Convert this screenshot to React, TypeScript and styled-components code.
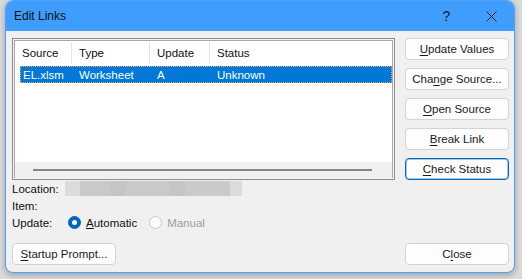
import styled, { createGlobalStyle } from 'styled-components';

const GlobalStyle = createGlobalStyle`
  *, *::before, *::after {
    box-sizing: border-box;
  }
  html, body {
    margin: 0;
    padding: 0;
    background: #dadada;
    font-family: 'Liberation Sans', Arial, sans-serif;
    font-size: 11.5px;
    color: #1a1a1a;
  }
`;

const columns = [
  { key: 'source', title: 'Source', width: 57 },
  { key: 'type', title: 'Type', width: 78 },
  { key: 'update', title: 'Update', width: 60 },
  { key: 'status', title: 'Status', width: 0 },
];

const links = [{ source: 'EL.xlsm', type: 'Worksheet', update: 'A', status: 'Unknown' }];

const sideButtons = [
  { pre: '', key: 'U', post: 'pdate Values' },
  { pre: 'Cha', key: 'n', post: 'ge Source...' },
  { pre: '', key: 'O', post: 'pen Source' },
  { pre: '', key: 'B', post: 'reak Link' },
  { pre: '', key: 'C', post: 'heck Status', focused: true },
];

const App = () => {
  return (
    <>
      <GlobalStyle />
      <Page>
        <Window>
          <TitleBar>
            <Title>Edit Links</Title>
            <TitleButton $shift={3}>?</TitleButton>
            <TitleButton>
              <svg width="11" height="11" viewBox="0 0 11 11">
                <path d="M0.5 0.5 L10.5 10.5 M10.5 0.5 L0.5 10.5" stroke="#1a1a1a" strokeWidth="1" />
              </svg>
            </TitleButton>
          </TitleBar>

          <Content>
            <TopSection>
              <LeftColumn>
                <ListView>
                  <Header>
                    {columns.map((c) => (
                      <HeaderCell key={c.key} $width={c.width}>
                        {c.title}
                      </HeaderCell>
                    ))}
                  </Header>
                  {links.map((l) => (
                    <Row key={l.source} $selected>
                      <FirstCell>{l.source}</FirstCell>
                      <Cell $width={78}>{l.type}</Cell>
                      <Cell $width={60}>{l.update}</Cell>
                      <Cell $width={0}>{l.status}</Cell>
                    </Row>
                  ))}
                  <Spacer />
                  <HScroll>
                    <Thumb />
                  </HScroll>
                </ListView>

                <InfoRow>
                  <Label>Location:</Label>
                  <Blurred />
                </InfoRow>
                <InfoRow>
                  <Label>Item:</Label>
                </InfoRow>
                <InfoRow>
                  <Label>Update:</Label>
                  <RadioGroup>
                    <RadioOption>
                      <Radio $checked />
                      <span>
                        <u>A</u>utomatic
                      </span>
                    </RadioOption>
                    <RadioOption $disabled>
                      <Radio />
                      <span>Manual</span>
                    </RadioOption>
                  </RadioGroup>
                </InfoRow>
              </LeftColumn>

              <ButtonStack>
                {sideButtons.map((b) => (
                  <Button key={b.post} $focused={b.focused}>
                    {b.pre}
                    <u>{b.key}</u>
                    {b.post}
                  </Button>
                ))}
              </ButtonStack>
            </TopSection>

            <BottomRow>
              <Button>
                <u>S</u>tartup Prompt...
              </Button>
              <Button>
                C<u>l</u>ose
              </Button>
            </BottomRow>
          </Content>
        </Window>
      </Page>
    </>
  );
};

const Page = styled.div`
  width: 522px;
  height: 279px;
  padding-left: 5px;
  overflow: hidden;
`;

const Window = styled.div`
  width: 510px;
  height: 273px;
  border: 1px solid #4aa2fb;
  border-radius: 8px;
  overflow: hidden;
  background: #f0f0f0;
  box-shadow: 0 2px 6px rgba(0, 0, 0, 0.28);
  display: flex;
  flex-direction: column;
`;

const TitleBar = styled.div`
  height: 30px;
  flex-shrink: 0;
  background: #3f9dfd;
  display: flex;
  align-items: center;
  padding-left: 8px;
`;

const Title = styled.div`
  flex: 1;
  font-size: 12px;
  color: #111;
  margin-top: -1px;
`;

const TitleButton = styled.div<{ $shift?: number }>`
  width: 46px;
  height: 30px;
  display: flex;
  align-items: center;
  justify-content: center;
  padding-left: ${(p) => p.$shift ?? 0}px;
  font-size: 14px;
  color: #1a1a1a;
`;

const Content = styled.div`
  flex: 1;
  display: flex;
  flex-direction: column;
  padding: 7px 5px 7px 6px;
`;

const TopSection = styled.div`
  display: flex;
  gap: 10px;
`;

const LeftColumn = styled.div`
  width: 383px;
  display: flex;
  flex-direction: column;
`;

const ListView = styled.div`
  height: 142px;
  background: #fff;
  border: 1px solid #8c8c8c;
  box-shadow: inset 0 0 0 1px #f4f4f4, inset 0 0 0 2px #a8a8a8;
  padding: 2px 2px 1px 2px;
  display: flex;
  flex-direction: column;
`;

const Header = styled.div`
  height: 22px;
  margin-top: 1px;
  display: flex;
  align-items: center;
`;

const HeaderCell = styled.div<{ $width: number }>`
  ${(p) => (p.$width ? `width: ${p.$width}px;` : 'flex: 1;')}
  height: 100%;
  display: flex;
  align-items: center;
  padding-left: 7px;
  border-right: ${(p) => (p.$width ? '1px solid #e5e5e5' : 'none')};
  color: #111;
`;

const Row = styled.div<{ $selected?: boolean }>`
  height: 17px;
  margin: 2px 0 0 5px;
  display: flex;
  align-items: center;
  background: ${(p) => (p.$selected ? '#0078d7' : 'transparent')};
  color: ${(p) => (p.$selected ? '#fff' : '#111')};
  outline: ${(p) => (p.$selected ? '1px dotted #f2a662' : 'none')};
  outline-offset: -1px;
`;

const FirstCell = styled.div`
  width: 52px;
  padding-left: 3px;
`;

const Cell = styled.div<{ $width: number }>`
  ${(p) => (p.$width ? `width: ${p.$width}px;` : 'flex: 1;')}
  padding-left: 7px;
`;

const Spacer = styled.div`
  flex: 1;
`;

const HScroll = styled.div`
  height: 16px;
  background: #f0f0f0;
  display: flex;
  align-items: center;
  padding: 0 20px 0 18px;
`;

const Thumb = styled.div`
  flex: 1;
  height: 2px;
  background: #858585;
`;

const InfoRow = styled.div`
  height: 17px;
  display: flex;
  align-items: center;
  &:first-of-type {
    margin-top: 2px;
  }
`;

const Label = styled.div`
  width: 53px;
  color: #111;
`;

const Blurred = styled.div`
  width: 177px;
  height: 15px;
  background: linear-gradient(
    90deg,
    #dcdcdc 0px,
    #dcdcdc 15px,
    #c9c9c9 15px,
    #c9c9c9 45px,
    #c5c5c5 45px,
    #c5c5c5 60px,
    #c9c9c9 60px,
    #c9c9c9 105px,
    #c6c4c4 105px,
    #c6c4c4 120px,
    #cacaca 120px,
    #cacaca 165px,
    #dcdcdc 165px
  );
`;

const RadioGroup = styled.div`
  display: flex;
  align-items: center;
  gap: 12px;
  margin-left: 3px;
`;

const RadioOption = styled.div<{ $disabled?: boolean }>`
  display: flex;
  align-items: center;
  gap: 5px;
  color: ${(p) => (p.$disabled ? '#9f9f9f' : '#111')};
`;

const Radio = styled.div<{ $checked?: boolean }>`
  width: 13px;
  height: 13px;
  border-radius: 50%;
  background: ${(p) => (p.$checked ? '#0067c0' : '#fbfbfb')};
  border: 1px solid ${(p) => (p.$checked ? '#0067c0' : '#c9c9c9')};
  display: flex;
  align-items: center;
  justify-content: center;
  &::after {
    content: '';
    display: ${(p) => (p.$checked ? 'block' : 'none')};
    width: 5px;
    height: 5px;
    border-radius: 50%;
    background: #fff;
  }
`;

const ButtonStack = styled.div`
  display: flex;
  flex-direction: column;
  gap: 8px;
`;

const Button = styled.button<{ $focused?: boolean }>`
  width: 104px;
  height: 22px;
  padding: 0;
  font-family: inherit;
  font-size: 11.5px;
  color: #1a1a1a;
  background: #fdfdfd;
  border: 1px solid ${(p) => (p.$focused ? '#0067c0' : '#d3d3d3')};
  box-shadow: ${(p) => (p.$focused ? 'inset 0 0 0 1px rgba(0, 103, 192, 0.35)' : 'none')};
  border-radius: 4px;
  u {
    text-underline-offset: 2px;
  }
`;

const BottomRow = styled.div`
  margin-top: auto;
  display: flex;
  justify-content: space-between;
`;

export default App;
